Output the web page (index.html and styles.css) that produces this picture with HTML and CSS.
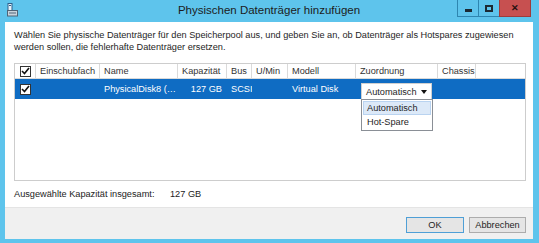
FILE: index.html
```html
<!DOCTYPE html>
<html lang="de">
<head>
    <meta charset="UTF-8">
    <meta name="viewport" content="width=device-width, initial-scale=1.0">
    <title>Physischen Datenträger hinzufügen</title>
    <link rel="stylesheet" href="styles.css">
</head>
<body>
    <div class="window">
        <div class="titlebar">
            <svg class="app-icon" width="11" height="14" viewBox="0 0 11 14">
                <rect x="1" y="0.5" width="4" height="7" fill="#e8f4fb" stroke="#2f5f8a"/>
                <rect x="2" y="2" width="2" height="1" fill="#2f5f8a"/>
                <rect x="0.5" y="7.5" width="10" height="5.5" fill="#c9d3dc" stroke="#4f6476"/>
                <rect x="2" y="9" width="7" height="2" fill="#8d9cab"/>
            </svg>
            <div class="title">Physischen Datenträger hinzufügen</div>
            <div class="caption-buttons">
                <span class="cap-btn min"><i></i></span>
                <span class="cap-btn max"><i></i></span>
                <span class="cap-btn close">&#x2715;</span>
            </div>
        </div>

        <div class="client">
            <div class="main">
                <p class="desc">Wählen Sie physische Datenträger für den Speicherpool aus, und geben Sie an, ob Datenträger als Hotspares zugewiesen werden sollen, die fehlerhafte Datenträger ersetzen.</p>

                <div class="grid">
                    <div class="grid-row head">
                        <div class="cell chk"><span class="checkbox"><svg width="9" height="8" viewBox="0 0 9 8"><path d="M1 4 L3.5 6.5 L8 1" fill="none" stroke="#111" stroke-width="1.6"/></svg></span></div>
                        <div class="cell">Einschubfach</div>
                        <div class="cell">Name</div>
                        <div class="cell">Kapazität</div>
                        <div class="cell">Bus</div>
                        <div class="cell">U/Min</div>
                        <div class="cell">Modell</div>
                        <div class="cell">Zuordnung</div>
                        <div class="cell">Chassis</div>
                        <div class="cell last"></div>
                    </div>
                    <div class="grid-row selected">
                        <div class="cell chk"><span class="checkbox"><svg width="9" height="8" viewBox="0 0 9 8"><path d="M1 4 L3.5 6.5 L8 1" fill="none" stroke="#111" stroke-width="1.6"/></svg></span></div>
                        <div class="cell"></div>
                        <div class="cell">PhysicalDisk8 (…</div>
                        <div class="cell num">127 GB</div>
                        <div class="cell">SCSI</div>
                        <div class="cell"></div>
                        <div class="cell">Virtual Disk</div>
                        <div class="cell combo-cell">
                            <div class="combo">
                                <span>Automatisch</span>
                                <span class="arrow"></span>
                                <ul class="dropdown">
                                    <li class="active">Automatisch</li>
                                    <li>Hot-Spare</li>
                                </ul>
                            </div>
                        </div>
                        <div class="cell"></div>
                        <div class="cell last"></div>
                    </div>
                </div>

                <div class="total">
                    <span>Ausgewählte Kapazität insgesamt:</span>
                    <span>127 GB</span>
                </div>
            </div>

            <div class="footer">
                <button class="btn default">OK</button>
                <button class="btn">Abbrechen</button>
            </div>
        </div>
    </div>
</body>
</html>
```

FILE: styles.css
```css
* {
    margin: 0;
    padding: 0;
    box-sizing: border-box;
    font-family: 'Liberation Sans', Arial, sans-serif;
}

body {
    width: 539px;
    height: 243px;
    overflow: hidden;
    background: #5ec4ec;
}

.window {
    width: 539px;
    height: 243px;
    display: flex;
    flex-direction: column;
    background: #5ec4ec;
}

/* Titelleiste */
.titlebar {
    height: 22px;
    display: grid;
    grid-template-columns: 1fr auto 1fr;
    align-items: start;
    padding: 0 8px 0 7px;
}

.app-icon {
    margin-top: 3px;
}

.title {
    font-size: 11.5px;
    color: #1c1c1c;
    line-height: 21px;
}

.caption-buttons {
    justify-self: end;
    display: flex;
    height: 17px;
}

.cap-btn {
    height: 17px;
    display: flex;
    justify-content: center;
    align-items: center;
    border: 1px solid #2e86b0;
    border-top: none;
}

.cap-btn.min {
    width: 21px;
    border-right: none;
}

.cap-btn.min i {
    width: 7px;
    height: 3px;
    margin-top: 5px;
    background: #1c2a33;
}

.cap-btn.max {
    width: 21px;
    border-right: none;
}

.cap-btn.max i {
    width: 8px;
    height: 7px;
    border: 2px solid #1c2a33;
}

.cap-btn.close {
    width: 32px;
    background: #c75050;
    border-color: #9e3b3b;
    color: #2a1010;
    font-size: 9px;
    font-weight: bold;
}

/* Inhalt */
.client {
    flex: 1;
    margin: 0 6px 4px 5px;
    background: #fff;
    display: flex;
    flex-direction: column;
}

.main {
    flex: 1;
    padding: 7px 7px 0 9px;
    font-size: 9.2px;
    color: #1e1e1e;
}

.desc {
    line-height: 12px;
    margin-bottom: 10px;
}

.grid {
    height: 118px;
    border: 1px solid #cdcdcd;
}

.grid-row {
    display: grid;
    grid-template-columns: 21px 64px 78px 49px 25px 36px 68px 82px 38px 1fr;
}

.grid-row.head {
    height: 15px;
    border-bottom: 1px solid #dadada;
    color: #333;
}

.grid-row.head .cell {
    border-right: 1px solid #dadada;
}

.grid-row.head .cell.last {
    border-right: none;
}

.cell {
    display: flex;
    align-items: center;
    padding: 0 2px 0 4px;
    white-space: nowrap;
    overflow: hidden;
}

.cell.chk {
    padding: 0 0 0 5px;
}

.cell.num {
    justify-content: flex-end;
    padding-right: 5px;
}

.grid-row.selected {
    height: 20px;
    background: #0f6cc3;
    color: #fff;
}

.checkbox {
    width: 11px;
    height: 11px;
    border: 1px solid #333;
    background: #fff;
    display: flex;
    justify-content: center;
    align-items: center;
}

.combo-cell {
    overflow: visible;
    align-items: flex-end;
    padding: 0 0 0 5px;
}

.combo {
    position: relative;
    width: 71px;
    height: 16px;
    background: #fff;
    color: #1e1e1e;
    border: 1px solid #d0d0d0;
    border-bottom: none;
    display: flex;
    align-items: center;
    justify-content: space-between;
    padding: 0 4px 0 4px;
}

.arrow {
    width: 0;
    height: 0;
    border-left: 3px solid transparent;
    border-right: 3px solid transparent;
    border-top: 4px solid #111;
}

.dropdown {
    position: absolute;
    top: 100%;
    left: -1px;
    width: 72px;
    list-style: none;
    background: #fff;
    border: 1px solid #8a8f96;
    padding: 1px;
}

.dropdown li {
    height: 14px;
    line-height: 12px;
    padding: 0 3px;
    border: 1px solid transparent;
}

.dropdown li.active {
    background: #dce9f8;
    border-color: #b9d3f0;
}

.total {
    display: grid;
    grid-template-columns: 156px auto;
    padding-top: 7px;
    line-height: 12px;
    color: #222;
}

/* Fußleiste */
.footer {
    height: 32px;
    background: #f0f0f0;
    border-top: 1px solid #e4e4e4;
    display: flex;
    justify-content: flex-end;
    align-items: flex-start;
    gap: 5px;
    padding: 9px 7px 0 0;
}

.btn {
    height: 16px;
    font-size: 9.2px;
    color: #1e1e1e;
    background: #e5e5e5;
    border: 1px solid #acacac;
}

.btn.default {
    width: 58px;
    border-color: #4f9fd6;
}

.btn:not(.default) {
    width: 57px;
}
```
